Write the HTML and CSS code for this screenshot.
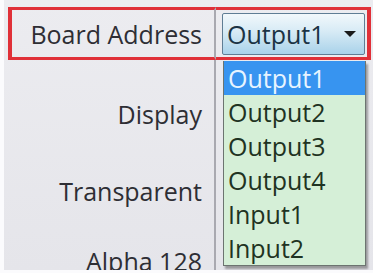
FILE: index.html
```html
<!DOCTYPE html>
<html lang="en">
<head>
    <meta charset="UTF-8">
    <title>Board Address</title>
    <link rel="stylesheet" href="styles.css">
</head>
<body>
    <div class="panel">
        <div class="row selected">
            <div class="label">Board Address</div>
            <div class="value">
                <div class="combo">
                    <span>Output1</span>
                    <span class="arrow"></span>
                </div>
            </div>
        </div>
        <div class="row first">
            <div class="label">Display</div>
            <div class="value"></div>
        </div>
        <div class="row">
            <div class="label">Transparent</div>
            <div class="value"></div>
        </div>
        <div class="row last">
            <div class="label">Alpha 128</div>
            <div class="value"></div>
        </div>

        <ul class="dropdown">
            <li class="active">Output1</li>
            <li>Output2</li>
            <li>Output3</li>
            <li>Output4</li>
            <li>Input1</li>
            <li>Input2</li>
        </ul>
    </div>
</body>
</html>
```

FILE: styles.css
```css
* {
    margin: 0;
    padding: 0;
    box-sizing: border-box;
}
html, body {
    width: 100%;
    height: 100%;
    overflow: hidden;
    background: #fbfbfd;
}
body {
    font-family: "Open Sans", "Noto Sans", sans-serif;
    font-size: 25px;
    color: #2e2e34;
}
.panel {
    position: relative;
    margin-left: 4px;
    height: 270px;
    background: linear-gradient(to bottom, #ececf0, #e5e5ea);
    overflow: hidden;
}
.row {
    display: flex;
    height: 77px;
}
.row.selected {
    height: 60px;
    padding-top: 7px;
}
.row.first {
    height: 92px;
}
.row.first .label {
    padding-top: 15px;
}
.row.last {
    height: 64px;
}
.label {
    width: 212px;
    display: flex;
    align-items: center;
    justify-content: flex-end;
    padding-right: 12px;
    border-right: 2px solid #a9a9b0;
}
.value {
    flex: 1;
    display: flex;
    align-items: center;
    padding-left: 6px;
}
.selected .label,
.selected .value {
    border-top: 3px solid #e03038;
    border-bottom: 3px solid #e03038;
}
.selected .label {
    margin-left: 4px;
    width: 208px;
    border-left: 4px solid #e03038;
}
.selected .value {
    border-right: 4px solid #e03038;
    margin-right: 2px;
}
.combo {
    width: 143px;
    height: 42px;
    display: flex;
    align-items: center;
    justify-content: space-between;
    padding: 0 8px 0 4px;
    border: 1px solid #5f7d94;
    border-radius: 2px;
    background: linear-gradient(to bottom, #f2f8fb, #d6eaf5 45%, #a9d2ea);
    color: #1b3344;
}
.arrow {
    width: 0;
    height: 0;
    border-left: 6px solid transparent;
    border-right: 6px solid transparent;
    border-top: 6px solid #1a1a1a;
}
.dropdown {
    position: absolute;
    left: 219px;
    top: 61px;
    width: 143px;
    list-style: none;
    background: #d5efd7;
    border: 1px solid #6c7470;
    border-top: none;
    box-shadow: 2px 3px 2px rgba(60, 60, 60, 0.45);
    color: #1f3322;
}
.dropdown li {
    height: 34px;
    line-height: 34px;
    padding-left: 4px;
}
.dropdown li.active {
    background: #3794f0;
    color: #e8f4ff;
}
```
